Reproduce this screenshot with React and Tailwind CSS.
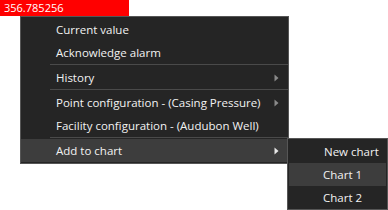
import React from "react";

const font = { fontFamily: '"Open Sans", "Noto Sans", sans-serif' };

function Arrow({ bright }) {
  return (
    <svg width="5" height="8" viewBox="0 0 5 8" className="shrink-0">
      <path d="M0.5 0.5 L4.5 4 L0.5 7.5 Z" fill={bright ? "#e8e8e8" : "#8a8a8a"} />
    </svg>
  );
}

function Item({ label, arrow, active, bright }) {
  return (
    <div
      className={
        "h-[23px] flex items-center pl-[35px] pr-[9px] text-[11.5px] text-[#f2f2f2] " +
        (active ? "bg-[#3d3d3d]" : "")
      }
    >
      <span className="flex-1 whitespace-nowrap">{label}</span>
      {arrow && <Arrow bright={bright} />}
    </div>
  );
}

function Sep() {
  return <div className="h-[2px] ml-[29px] border-t border-[#4a4a4a]" />;
}

export default function App() {
  return (
    <div className="relative w-[388px] h-[210px] bg-white overflow-hidden" style={font}>
      <div className="w-[129px] h-[16px] bg-[#ff0000] text-white text-[11px] leading-[15px] pl-[4px]">
        356.785256
      </div>

      <div className="absolute left-[20px] top-[16px] w-[269px] bg-[#252525] border border-[#565656] py-[1px]">
        <Item label="Current value" />
        <Item label="Acknowledge alarm" />
        <Sep />
        <Item label="History" arrow />
        <Sep />
        <Item label="Point configuration - (Casing Pressure)" arrow />
        <Item label="Facility configuration - (Audubon Well)" />
        <Sep />
        <Item label="Add to chart" arrow active bright />
      </div>

      <div className="absolute left-[287px] top-[138px] w-[101px] h-[72px] bg-[#252525] border border-[#565656] px-[1px] py-[1px]">
        <div className="h-[23px] flex items-center pl-[35px] text-[11.5px] text-[#f2f2f2] whitespace-nowrap">
          New chart
        </div>
        <div className="h-[23px] flex items-center pl-[34px] text-[11.5px] text-[#f2f2f2] bg-[#3d3d3d] whitespace-nowrap">
          Chart 1
        </div>
        <div className="h-[23px] flex items-center pl-[34px] text-[11.5px] text-[#f2f2f2] whitespace-nowrap">
          Chart 2
        </div>
      </div>
    </div>
  );
}
